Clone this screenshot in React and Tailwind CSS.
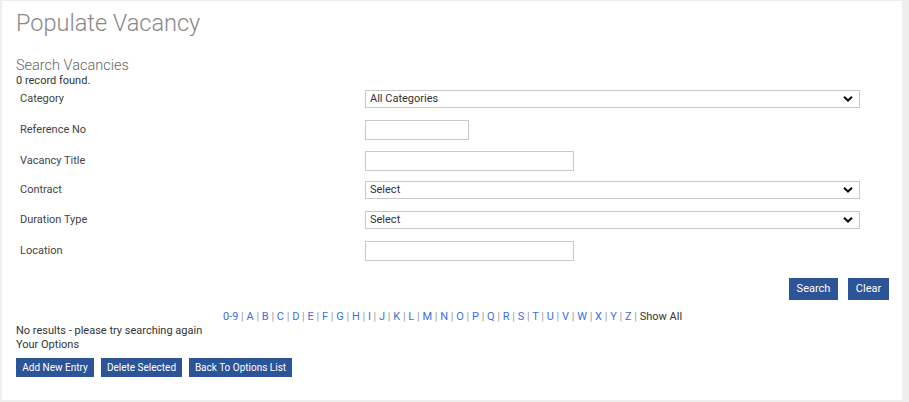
import React from "react";

const letters = ["0-9","A","B","C","D","E","F","G","H","I","J","K","L","M","N","O","P","Q","R","S","T","U","V","W","X","Y","Z"];

function Chevron() {
  return (
    <svg className="absolute right-[6px] top-1/2 -translate-y-1/2" width="10" height="7" viewBox="0 0 10 7">
      <path d="M1 1.2 L5 5 L9 1.2" fill="none" stroke="#111" strokeWidth="2.2" />
    </svg>
  );
}

function Select({ value }) {
  return (
    <div className="relative w-[495px] h-[18px] border border-[#c8c8c8] bg-white flex items-center pl-[4px] text-[11px] text-[#333]">
      {value}
      <Chevron />
    </div>
  );
}

function Input({ w }) {
  return <div className={`${w} h-[20px] border border-[#c8c8c8] bg-white`} />;
}

function Row({ label, h, children }) {
  return (
    <div className={`flex items-center ${h}`}>
      <div className="w-[349px] pl-[4px] text-[11px] text-[#444]">{label}</div>
      {children}
    </div>
  );
}

function Btn({ children, cls }) {
  return (
    <div className={`bg-[#2d5496] text-white flex items-center justify-center ${cls}`}>{children}</div>
  );
}

export default function App() {
  return (
    <div className="w-[909px] h-[402px] bg-[#eeeeee] pt-[1px] pl-[2px]" style={{ fontFamily: "Roboto, 'Liberation Sans', sans-serif" }}>
      <div className="w-[900px] h-[399px] bg-white pl-[14px] pr-[13px] flex flex-col">
        <div className="text-[23.5px] font-light text-[#888] leading-[30px] mt-[7px]">Populate Vacancy</div>
        <div className="text-[14.5px] font-light text-[#666] leading-[17px] mt-[19px]">Search Vacancies</div>
        <div className="text-[11px] text-[#333] leading-[13px]">0 record found.</div>
        <div className="flex flex-col mt-[-3px]">
          <Row label="Category" h="h-[30px]"><Select value="All Categories" /></Row>
          <Row label="Reference No" h="h-[32px]"><Input w="w-[104px]" /></Row>
          <Row label="Vacancy Title" h="h-[30px]"><Input w="w-[209px]" /></Row>
          <Row label="Contract" h="h-[28px]"><Select value="Select" /></Row>
          <Row label="Duration Type" h="h-[32px]"><Select value="Select" /></Row>
          <Row label="Location" h="h-[30px]"><Input w="w-[209px]" /></Row>
        </div>
        <div className="flex justify-end gap-[10px] mt-[12px]">
          <Btn cls="w-[49px] h-[22px] text-[11px]">Search</Btn>
          <Btn cls="w-[41px] h-[22px] text-[11px]">Clear</Btn>
        </div>
        <div className="text-center text-[11px] leading-[14px] mt-[10px] text-[#999]">
          {letters.map((l) => (
            <React.Fragment key={l}>
              <span className="text-[#3d6fd6]">{l}</span>
              {" | "}
            </React.Fragment>
          ))}
          <span className="text-[#333]">Show All</span>
        </div>
        <div className="text-[11px] text-[#333] leading-[14px]">No results - please try searching again</div>
        <div className="text-[11px] text-[#333] leading-[14px]">Your Options</div>
        <div className="flex gap-[7px] mt-[6px]">
          <Btn cls="w-[78px] h-[19px] text-[10px]">Add New Entry</Btn>
          <Btn cls="w-[81px] h-[19px] text-[10px]">Delete Selected</Btn>
          <Btn cls="w-[103px] h-[19px] text-[10px]">Back To Options List</Btn>
        </div>
      </div>
    </div>
  );
}
